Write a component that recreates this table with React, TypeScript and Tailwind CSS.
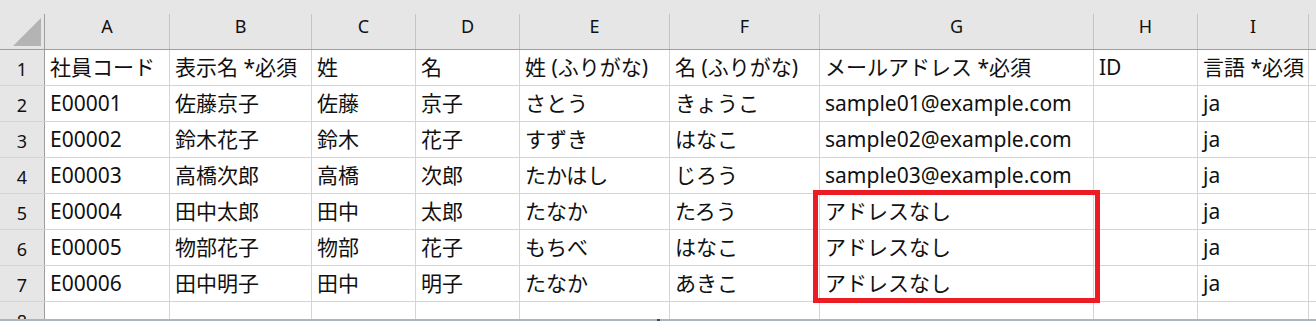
import React from 'react';

const cols = [
  { label: 'A', w: 'w-[125px]' },
  { label: 'B', w: 'w-[142px]' },
  { label: 'C', w: 'w-[104px]' },
  { label: 'D', w: 'w-[104px]' },
  { label: 'E', w: 'w-[150px]' },
  { label: 'F', w: 'w-[150px]' },
  { label: 'G', w: 'w-[274px]' },
  { label: 'H', w: 'w-[104px]' },
  { label: 'I', w: 'w-[111px]' },
];

const rows: string[][] = [
  ['社員コード', '表示名 *必須', '姓', '名', '姓 (ふりがな)', '名 (ふりがな)', 'メールアドレス *必須', 'ID', '言語 *必須'],
  ['E00001', '佐藤京子', '佐藤', '京子', 'さとう', 'きょうこ', 'sample01@example.com', '', 'ja'],
  ['E00002', '鈴木花子', '鈴木', '花子', 'すずき', 'はなこ', 'sample02@example.com', '', 'ja'],
  ['E00003', '高橋次郎', '高橋', '次郎', 'たかはし', 'じろう', 'sample03@example.com', '', 'ja'],
  ['E00004', '田中太郎', '田中', '太郎', 'たなか', 'たろう', 'アドレスなし', '', 'ja'],
  ['E00005', '物部花子', '物部', '花子', 'もちべ', 'はなこ', 'アドレスなし', '', 'ja'],
  ['E00006', '田中明子', '田中', '明子', 'たなか', 'あきこ', 'アドレスなし', '', 'ja'],
  ['', '', '', '', '', '', '', '', ''],
];

const font = "font-['Noto_Sans','Noto_Sans_CJK_JP',sans-serif]";

const ColumnHeader = () => (
  <div className="flex h-[36px] shrink-0 border-b border-[#9e9e9e] bg-[#e6e6e6]">
    <div className="w-[45px] shrink-0 border-r border-[#9e9e9e]">
      <svg width="44" height="35" viewBox="0 0 44 35">
        <polygon points="41,4 41,32 13,32" fill="#b4b4b4" />
      </svg>
    </div>
    {cols.map((c) => (
      <div
        key={c.label}
        className={`${c.w} shrink-0 border-r border-[#c4c4c4] flex justify-center text-[18px] leading-[25px] text-[#111]`}
      >
        {c.label}
      </div>
    ))}
    <div className="flex-1" />
  </div>
);

const Row = ({ n, cells }: { n: number; cells: string[] }) => (
  <div className="flex h-[36px] shrink-0 border-b border-[#d4d4d4]">
    <div className="w-[45px] shrink-0 bg-[#e6e6e6] border-r border-[#9e9e9e] flex items-center justify-center text-[18px] pt-[3px] text-[#111]">
      {n}
    </div>
    {cols.map((c, i) => (
      <div
        key={c.label}
        className={`${c.w} shrink-0 border-r border-[#d4d4d4] flex items-center pl-[5px] text-[21px] whitespace-nowrap overflow-hidden text-[#111]`}
      >
        {cells[i]}
      </div>
    ))}
    <div className="flex-1" />
  </div>
);

export default function App() {
  return (
    <div className={`relative w-[1316px] h-[321px] overflow-hidden bg-white flex flex-col ${font}`}>
      <div className="h-[14px] shrink-0 bg-[#e6e6e6]" />
      <ColumnHeader />
      {rows.map((r, i) => (
        <Row key={i} n={i + 1} cells={r} />
      ))}
      <div className="absolute left-0 right-0 bottom-0 h-[2px] bg-[#abb6c2]">
        <div className="ml-[657px] w-[3px] h-[2px] bg-[#444]" />
      </div>
      <div className="absolute left-[813px] top-[190px] w-[287px] h-[113px] border-[5px] border-[#ec1c24]" />
    </div>
  );
}
